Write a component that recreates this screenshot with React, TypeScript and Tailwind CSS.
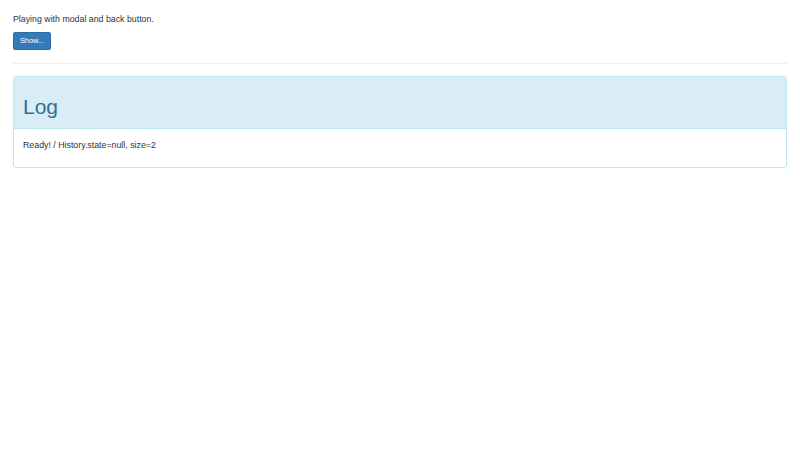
import React from "react";

export default function App() {
  return (
    <div
      className="min-h-[450px] w-[800px] bg-white px-[13px] pt-[13px] text-[#333333]"
      style={{ fontFamily: '"Liberation Sans", Arial, sans-serif' }}
    >
      <p className="m-0 text-[8.8px] leading-[12.6px]">Playing with modal and back button.</p>
      <button
        type="button"
        className="mt-[6.4px] flex h-[18px] w-[38px] items-center justify-center rounded-[2px] border border-[#2e6da4] bg-[#337ab7] text-[7.4px] leading-none text-white"
      >
        Show...
      </button>
      <hr className="mt-[13px] border-0 border-t border-[#eeeeee]" />
      <div className="mt-[12px] overflow-hidden rounded-[3px] border border-[#bce8f1] bg-white">
        <div className="h-[52px] border-b border-[#bce8f1] bg-[#d9edf7] pl-[9px] pt-[18px] text-[#31708f]">
          <h1 className="m-0 text-[21px] font-normal leading-[23px]">Log</h1>
        </div>
        <div className="px-[9px] pb-[16px] pt-[9.6px]">
          <p className="m-0 text-[8.8px] leading-[12.6px]">Ready! / History.state=null, size=2</p>
        </div>
      </div>
    </div>
  );
}
